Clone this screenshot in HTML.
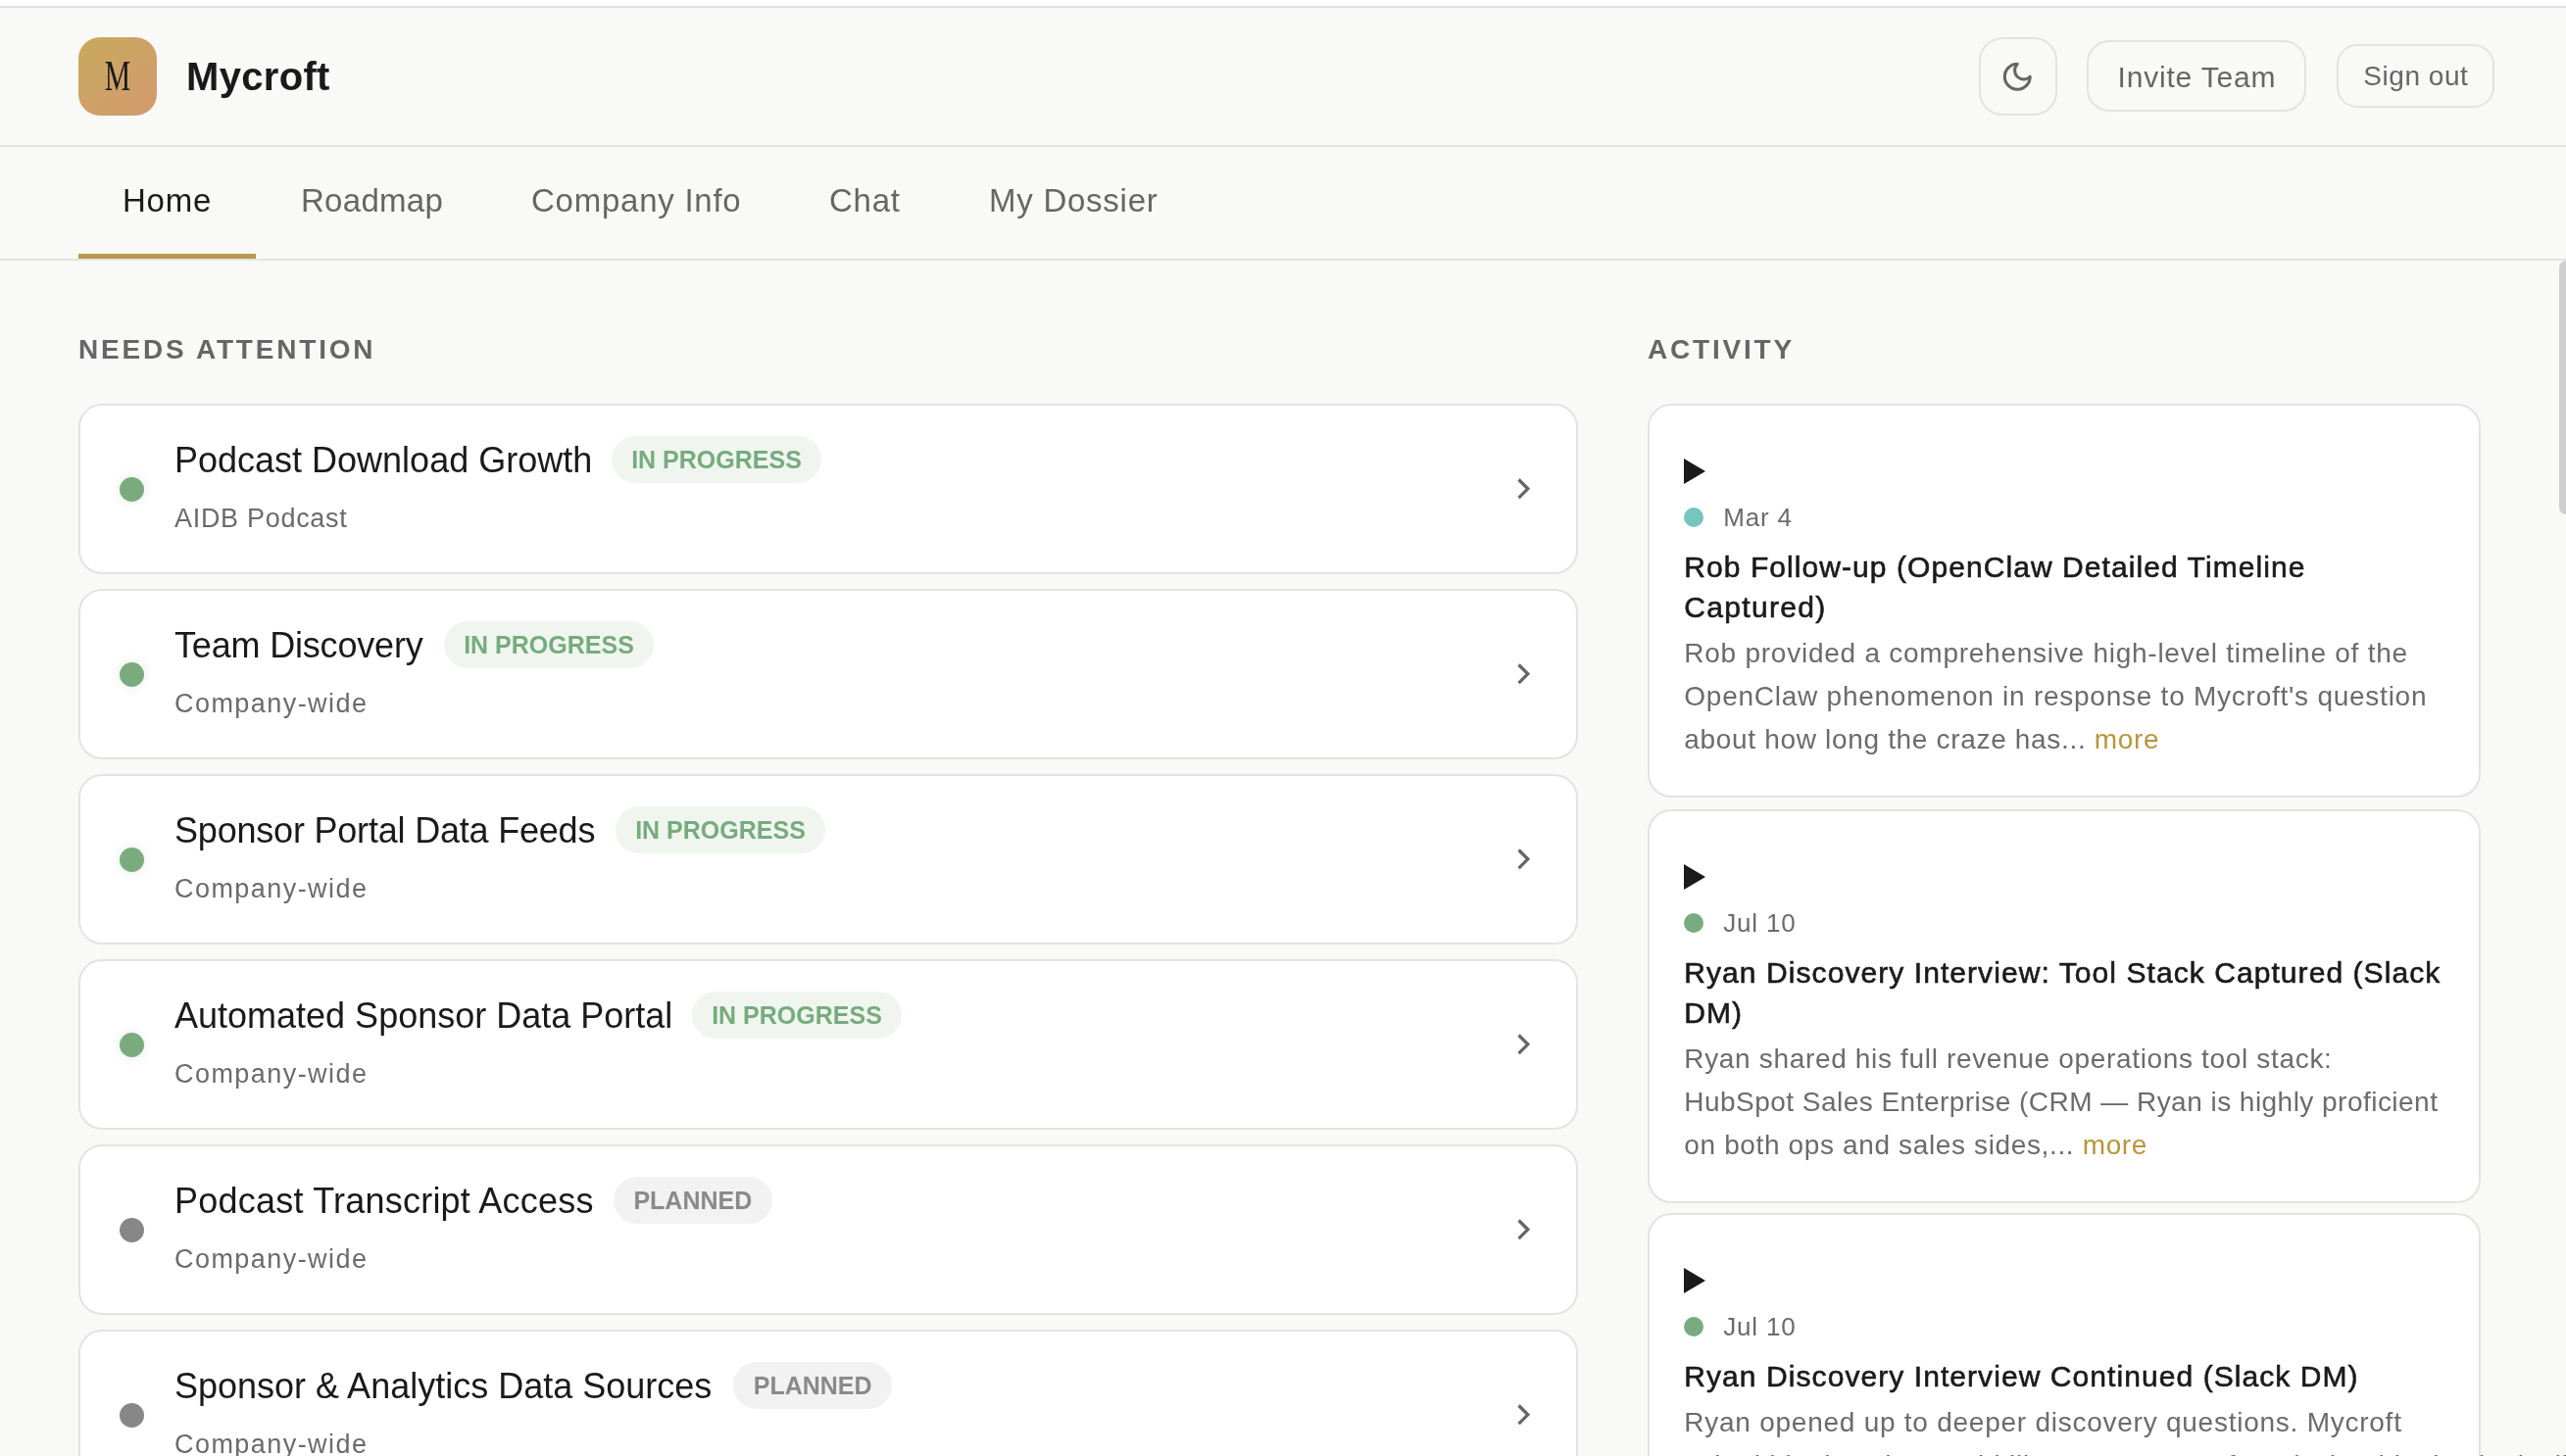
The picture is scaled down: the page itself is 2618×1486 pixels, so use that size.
<!DOCTYPE html>
<html><head><meta charset="utf-8">
<style>
html,body{margin:0;padding:0;}
body{-webkit-font-smoothing:antialiased;will-change:transform;width:2618px;height:1486px;overflow:hidden;position:relative;background:#f9f9f7;font-family:"Liberation Sans",sans-serif;color:#1a1a1a;}
.abs{position:absolute;}
#topstrip{left:0;top:0;width:2618px;height:6px;background:#fff;}
#topline{left:0;top:6px;width:2618px;height:2px;background:#e1e0e6;}
#hdrline{left:0;top:148px;width:2618px;height:2px;background:#e3e4df;}
#navline{left:0;top:264px;width:2618px;height:2px;background:#e3e4df;}
#logo{left:80px;top:38px;width:80px;height:80px;border-radius:22px;background:linear-gradient(135deg,#c8aa5c 0%,#cfa068 60%,#d3996f 100%);}
#logo span{position:absolute;left:0;top:0;width:80px;height:80px;line-height:80px;text-align:center;font-family:"Liberation Serif",serif;font-size:45px;color:#1a1a1a;transform:scaleX(0.66);top:-1px;}
#brand{left:190px;top:54px;font-size:40px;font-weight:bold;line-height:48px;white-space:nowrap;letter-spacing:0.33px;}
.btn{position:absolute;box-sizing:border-box;border:2px solid #e3e4df;background:#f9f9f7;color:#666;white-space:nowrap;text-align:center;}
#moon{left:2019px;top:38px;width:80px;height:80px;border-radius:24px;}
#invite{left:2129.4px;top:41.2px;width:224px;height:73px;border-radius:23px;font-size:30px;line-height:71px;letter-spacing:0.8px;}
#signout{left:2384.4px;top:45.4px;width:161px;height:65px;border-radius:21px;font-size:28px;line-height:61px;letter-spacing:0.54px;}
.nav{position:absolute;top:185px;font-size:33px;line-height:40px;color:#666;white-space:nowrap;letter-spacing:0.75px;}
#home{color:#1a1a1a;}
#uline{left:80px;top:259px;width:181px;height:5px;background:#b8984a;}
.sect{position:absolute;top:340px;font-size:28px;font-weight:bold;letter-spacing:2.8px;color:#666;line-height:34px;white-space:nowrap;}
.card{position:absolute;left:80px;width:1530px;height:174px;box-sizing:border-box;border:2px solid #e3e4df;border-radius:24px;background:#fff;}
.dot{position:absolute;left:40px;top:72.6px;width:25px;height:25px;border-radius:50%;background:#7aab7f;box-shadow:0 0 12px rgba(122,171,127,0.22);}
.dot.gray{background:#878787;box-shadow:none;}
.ttl{position:absolute;left:96px;top:34.1px;font-size:36px;line-height:44px;white-space:nowrap;color:#1a1a1a;}
.badge{position:absolute;top:30.9px;width:214px;text-align:center;height:48px;line-height:48px;border-radius:24px;background:#f0f5f0;color:#76ac7d;font-size:25px;font-weight:bold;white-space:nowrap;}
.badge.pl{width:162px;background:#f2f2f2;color:#8a8a8a;}
.sub{position:absolute;left:96px;top:98.3px;font-size:27px;line-height:34px;color:#6b6b6b;white-space:nowrap;letter-spacing:0.7px;}
.chev{position:absolute;left:1458px;top:65.6px;}
.acard{position:absolute;left:1681px;width:850px;height:402px;box-sizing:border-box;border:2px solid #e3e4df;border-radius:24px;background:#fff;}
.tri{position:absolute;left:34.5px;top:53.6px;width:0;height:0;border-left:22px solid #1a1a1a;border-top:13px solid transparent;border-bottom:13px solid transparent;}
.adot{position:absolute;left:34.5px;top:103.7px;width:20px;height:20px;border-radius:50%;background:#7aab7f;}
.adot.teal{background:#74c6bf;}
.date{position:absolute;left:75.3px;top:97px;font-size:26px;line-height:34px;color:#6b6b6b;white-space:nowrap;letter-spacing:0.8px;}
.atl{position:absolute;left:35.3px;top:144px;font-size:30px;line-height:41px;color:#1a1a1a;white-space:nowrap;letter-spacing:1.07px;-webkit-text-stroke:0.6px #1a1a1a;}
.abody{position:absolute;left:35.3px;font-size:28px;line-height:44px;color:#6b6b6b;white-space:nowrap;letter-spacing:0.75px;}
.more{color:#b8963e;}
#thumb{left:2611px;top:266px;width:14px;height:259px;border-radius:7px;background:#cfcfcf;}
</style></head><body>
<div id="topstrip" class="abs"></div>
<div id="topline" class="abs"></div>
<div id="logo" class="abs"><span>M</span></div>
<div id="brand" class="abs">Mycroft</div>
<div id="moon" class="btn"></div><svg class="abs" style="left:2041.2px;top:61.2px" width="34.5" height="34.5" viewBox="0 0 24 24"><path d="M12 3a6 6 0 0 0 9 9 9 9 0 1 1-9-9Z" fill="none" stroke="#666" stroke-width="2.15" stroke-linecap="round" stroke-linejoin="round"/></svg>
<div id="invite" class="btn">Invite Team</div>
<div id="signout" class="btn">Sign out</div>
<div id="hdrline" class="abs"></div>
<div class="nav" id="home" style="left:125px">Home</div>
<div class="nav" style="left:307px;letter-spacing:0.28px">Roadmap</div>
<div class="nav" style="left:542px">Company Info</div>
<div class="nav" style="left:846px">Chat</div>
<div class="nav" style="left:1009px">My Dossier</div>
<div id="uline" class="abs"></div>
<div id="navline" class="abs"></div>

<div class="sect" style="left:80px">NEEDS ATTENTION</div>
<div class="sect" style="left:1681px">ACTIVITY</div>

<div class="card" style="top:412px"><div class="dot"></div><div class="ttl">Podcast Download Growth</div><div class="badge" style="left:542px">IN PROGRESS</div><div class="sub">AIDB Podcast</div><svg class="chev" width="30" height="40" viewBox="0 0 30 40"><path d="M9.5 9.5 L18.8 18.8 L9.5 28.1" fill="none" stroke="#666" stroke-width="3.3" stroke-linecap="butt" stroke-linejoin="miter"/></svg></div>
<div class="card" style="top:601px"><div class="dot"></div><div class="ttl" style="letter-spacing:-0.18px">Team Discovery</div><div class="badge" style="left:371px">IN PROGRESS</div><div class="sub" style="letter-spacing:1.44px">Company-wide</div><svg class="chev" width="30" height="40" viewBox="0 0 30 40"><path d="M9.5 9.5 L18.8 18.8 L9.5 28.1" fill="none" stroke="#666" stroke-width="3.3" stroke-linecap="butt" stroke-linejoin="miter"/></svg></div>
<div class="card" style="top:790px"><div class="dot"></div><div class="ttl" style="letter-spacing:-0.2px">Sponsor Portal Data Feeds</div><div class="badge" style="left:546px">IN PROGRESS</div><div class="sub" style="letter-spacing:1.44px">Company-wide</div><svg class="chev" width="30" height="40" viewBox="0 0 30 40"><path d="M9.5 9.5 L18.8 18.8 L9.5 28.1" fill="none" stroke="#666" stroke-width="3.3" stroke-linecap="butt" stroke-linejoin="miter"/></svg></div>
<div class="card" style="top:979px"><div class="dot"></div><div class="ttl">Automated Sponsor Data Portal</div><div class="badge" style="left:624px">IN PROGRESS</div><div class="sub" style="letter-spacing:1.44px">Company-wide</div><svg class="chev" width="30" height="40" viewBox="0 0 30 40"><path d="M9.5 9.5 L18.8 18.8 L9.5 28.1" fill="none" stroke="#666" stroke-width="3.3" stroke-linecap="butt" stroke-linejoin="miter"/></svg></div>
<div class="card" style="top:1168px"><div class="dot gray"></div><div class="ttl" style="letter-spacing:0.22px">Podcast Transcript Access</div><div class="badge pl" style="left:543.8px">PLANNED</div><div class="sub" style="letter-spacing:1.44px">Company-wide</div><svg class="chev" width="30" height="40" viewBox="0 0 30 40"><path d="M9.5 9.5 L18.8 18.8 L9.5 28.1" fill="none" stroke="#666" stroke-width="3.3" stroke-linecap="butt" stroke-linejoin="miter"/></svg></div>
<div class="card" style="top:1357px"><div class="dot gray"></div><div class="ttl">Sponsor &amp; Analytics Data Sources</div><div class="badge pl" style="left:666.2px">PLANNED</div><div class="sub" style="letter-spacing:1.44px">Company-wide</div><svg class="chev" width="30" height="40" viewBox="0 0 30 40"><path d="M9.5 9.5 L18.8 18.8 L9.5 28.1" fill="none" stroke="#666" stroke-width="3.3" stroke-linecap="butt" stroke-linejoin="miter"/></svg></div>

<div class="acard" style="top:412px"><div class="tri"></div><div class="adot teal"></div><div class="date">Mar 4</div>
<div class="atl"><span id="t11">Rob Follow-up (OpenClaw Detailed Timeline</span><br><span id="t12" style="letter-spacing:1.32px">Captured)</span></div>
<div class="abody" style="top:231px"><span id="b11">Rob provided a comprehensive high-level timeline of the</span><br><span id="b12">OpenClaw phenomenon in response to Mycroft's question</span><br><span id="b13" style="letter-spacing:0.676px">about how long the craze has... <span class="more">more</span></span></div></div>

<div class="acard" style="top:826px"><div class="tri"></div><div class="adot"></div><div class="date">Jul 10</div>
<div class="atl"><span id="t21">Ryan Discovery Interview: Tool Stack Captured (Slack</span><br><span id="t22">DM)</span></div>
<div class="abody" style="top:231px"><span id="b21" style="letter-spacing:0.666px">Ryan shared his full revenue operations tool stack:</span><br><span id="b22" style="letter-spacing:0.47px">HubSpot Sales Enterprise (CRM — Ryan is highly proficient</span><br><span id="b23" style="letter-spacing:0.636px">on both ops and sales sides,... <span class="more">more</span></span></div></div>

<div class="acard" style="top:1238px"><div class="tri"></div><div class="adot"></div><div class="date">Jul 10</div>
<div class="atl"><span id="t31">Ryan Discovery Interview Continued (Slack DM)</span></div>
<div class="abody" style="top:190px"><span id="b31">Ryan opened up to deeper discovery questions. Mycroft</span><br><span id="b32">asked him how he would like to use Mycroft and what his day looks like</span></div></div>

<div id="thumb" class="abs"></div>
</body></html>
